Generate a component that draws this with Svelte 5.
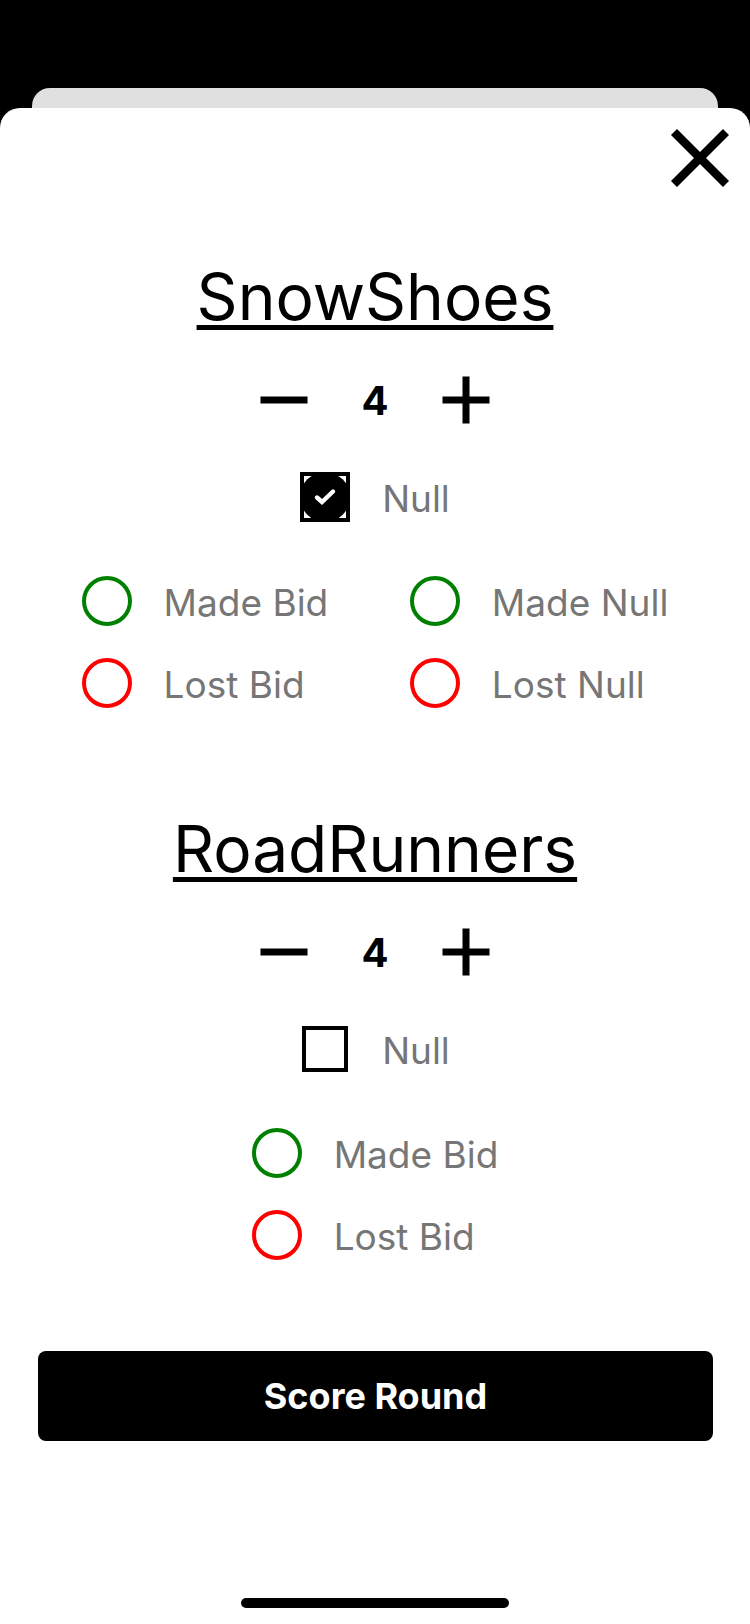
<script lang="ts">
  type Team = { name: string; bid: number; isNull: boolean; bidResult: string; nullResult: string };

  let teams: Team[] = $state([
    { name: 'SnowShoes', bid: 4, isNull: true, bidResult: '', nullResult: '' },
    { name: 'RoadRunners', bid: 4, isNull: false, bidResult: '', nullResult: '' }
  ]);
</script>

<div class="screen">
  <div class="behind"></div>
  <main class="sheet">
    <header>
      <button class="icon close" aria-label="Close">
        <svg width="60" height="60" viewBox="0 0 60 60"><path d="M4 4 56 56M56 4 4 56" stroke="#000" stroke-width="8.500" /></svg>
      </button>
    </header>

    {#each teams as team}
      <section>
        <h2>{team.name}</h2>
        <div class="stepper">
          <button class="icon" aria-label="Decrease bid" onclick={() => (team.bid -= 1)}>
            <svg width="48" height="48" viewBox="0 0 48 48"><path d="M.5 24h47" stroke="#000" stroke-width="7" /></svg>
          </button>
          <output>{team.bid}</output>
          <button class="icon" aria-label="Increase bid" onclick={() => (team.bid += 1)}>
            <svg width="48" height="48" viewBox="0 0 48 48"><path d="M.5 24h47M24 .5v47" stroke="#000" stroke-width="7" /></svg>
          </button>
        </div>
        <label class="option null">
          <span class="tick">
            <input type="checkbox" bind:checked={team.isNull} />
            {#if team.isNull}
              <svg class="mark" width="50" height="50" viewBox="0 0 50 50">
                <rect x="2" y="2" width="46" height="46" fill="#fff" stroke="#000" stroke-width="4" />
                <circle cx="25" cy="25" r="25" fill="#000" />
                <path d="M17 25.500 22 30 33 19.500" fill="none" stroke="#fff" stroke-width="4.400" stroke-linecap="round" />
              </svg>
            {/if}
          </span>
          <span class="text">Null</span>
        </label>
        <div class="results">
          <div class="group">
            <label class="option"><input class="made" type="radio" name="{team.name}-bid" value="made" bind:group={team.bidResult} /><span class="text">Made Bid</span></label>
            <label class="option"><input class="lost" type="radio" name="{team.name}-bid" value="lost" bind:group={team.bidResult} /><span class="text">Lost Bid</span></label>
          </div>
          {#if team.isNull}
            <div class="group">
              <label class="option"><input class="made" type="radio" name="{team.name}-null" value="made" bind:group={team.nullResult} /><span class="text">Made Null</span></label>
              <label class="option"><input class="lost" type="radio" name="{team.name}-null" value="lost" bind:group={team.nullResult} /><span class="text">Lost Null</span></label>
            </div>
          {/if}
        </div>
      </section>
    {/each}

    <button class="score">Score Round</button>
    <div class="home"></div>
  </main>
</div>

<style>
  :global(body) {
    margin: 0;
    background: #000;
  }
  .screen {
    box-sizing: border-box;
    min-height: 100vh;
    padding-top: 88px;
    display: flex;
    flex-direction: column;
    background: #000;
    font-family: Inter, "Liberation Sans", sans-serif;
    color: #000;
  }
  .behind {
    height: 20px;
    margin: 0 32px;
    border-radius: 18px 18px 0 0;
    background: #e0e0e0;
  }
  .sheet {
    flex: 1;
    display: flex;
    flex-direction: column;
    background: #fff;
    border-radius: 20px 20px 0 0;
  }
  header {
    display: flex;
    justify-content: flex-end;
    padding: 20px 20px 0;
  }
  .icon {
    display: flex;
    padding: 0;
    border: 0;
    background: none;
  }
  section {
    display: flex;
    flex-direction: column;
    align-items: center;
    padding-top: 68px;
  }
  section + section {
    padding-top: 100px;
  }
  h2 {
    margin: 0;
    font-size: 64px;
    line-height: 82px;
    font-weight: 400;
    text-decoration: underline;
    text-decoration-thickness: 5px;
    text-underline-offset: 5px;
    text-decoration-skip-ink: none;
  }
  .stepper {
    display: flex;
    align-items: center;
    justify-content: space-between;
    width: 230px;
    margin-top: 38px;
  }
  output {
    padding-top: 2px;
    font-size: 40px;
    line-height: 46px;
    font-weight: 700;
  }
  .option {
    display: flex;
    align-items: center;
    gap: 32px;
    color: #767676;
  }
  .text {
    padding-top: 3px;
    font-size: 37px;
    line-height: 47px;
  }
  .null {
    margin-top: 48px;
  }
  .tick {
    position: relative;
    display: flex;
    width: 50px;
    height: 50px;
  }
  input {
    appearance: none;
    box-sizing: border-box;
    width: 50px;
    height: 50px;
    margin: 0;
    border: 4px solid;
    background: #fff;
  }
  .tick input {
    width: 46px;
    height: 46px;
    margin: 2px;
    border-color: #000;
  }
  .mark {
    position: absolute;
    inset: 0;
    pointer-events: none;
  }
  .made,
  .lost {
    border-radius: 50%;
  }
  .made {
    border-color: #008000;
  }
  .lost {
    border-color: #f00;
  }
  .made:checked {
    background: #008000;
  }
  .lost:checked {
    background: #f00;
  }
  .results {
    display: flex;
    justify-content: space-evenly;
    align-self: stretch;
    margin-top: 54px;
  }
  .group {
    display: flex;
    flex-direction: column;
    gap: 32px;
  }
  .score {
    height: 90px;
    margin: 91px 37px 0 38px;
    border: 0;
    border-radius: 8px;
    background: #000;
    color: #fff;
    font: 700 36px/44px Inter, "Liberation Sans", sans-serif;
  }
  .home {
    width: 268px;
    height: 10px;
    margin: auto auto 16px;
    border-radius: 5px;
    background: #000;
  }
</style>
